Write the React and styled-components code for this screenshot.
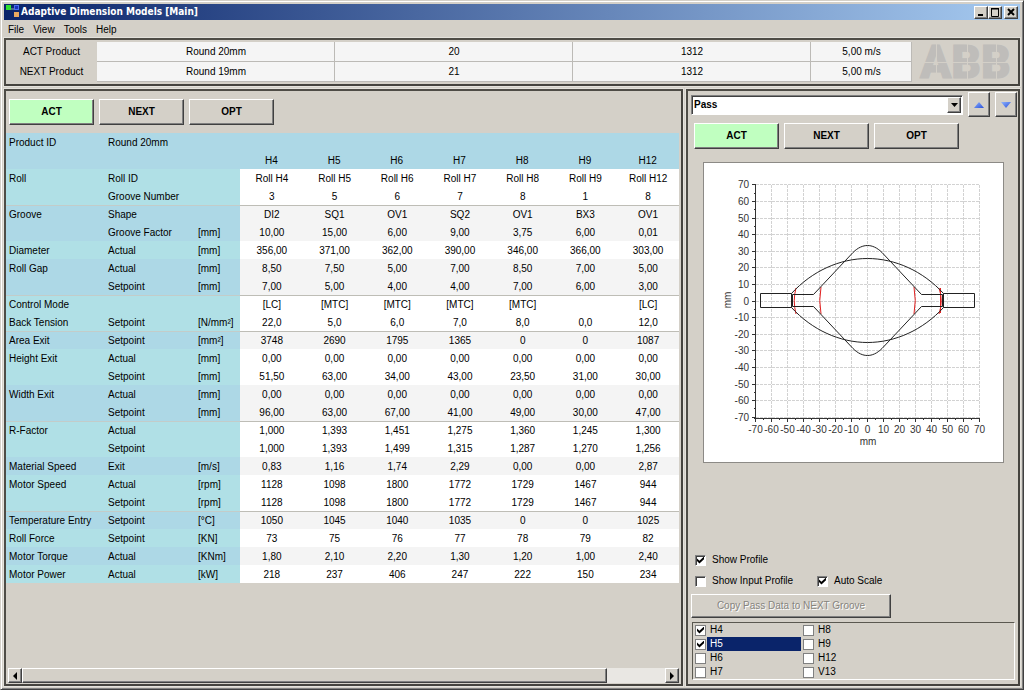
import React, { useState } from "react";
import styled, { createGlobalStyle, css } from "styled-components";

const GlobalStyle = createGlobalStyle`
  *, *::before, *::after { box-sizing: border-box; }
  body { margin: 0; background: #d4d0c8; }
  body, button, input, select, table {
    font-family: "Liberation Sans", Arial, sans-serif;
    font-size: 10px;
    line-height: 12px;
    color: #000;
  }
`;

const raised = css`
  border: 1px solid;
  border-color: #fff #404040 #404040 #fff;
  box-shadow: inset -1px -1px 0 #808080;
`;

const sunken = css`
  border: 1px solid;
  border-color: #808080 #fff #fff #808080;
  box-shadow: inset 1px 1px 0 #404040;
`;

const Window = styled.div`
  display: flex;
  flex-direction: column;
  min-height: 100vh;
  padding: 3px 3px 3px 3px;
  border: 1px solid;
  border-color: #d4d0c8 #404040 #404040 #d4d0c8;
  box-shadow: inset 1px 1px 0 #fff, inset -1px -1px 0 #808080;
  background: #d4d0c8;
`;

const TitleBar = styled.header`
  display: flex;
  align-items: center;
  height: 16px;
  padding: 0 2px 0 1px;
  background: linear-gradient(to right, #0a246a, #a6caf0);
`;

const Title = styled.h1`
  flex: 1;
  margin: 0;
  font-family: "DejaVu Sans Condensed", "DejaVu Sans", sans-serif;
  font-size: 10px;
  font-weight: bold;
  color: #fff;
`;

const CaptionButton = styled.button`
  ${raised}
  display: flex;
  width: 14px;
  height: 13px;
  padding: 0;
  margin-left: ${(p) => (p.$apart ? "2px" : "0")};
  background: #d4d0c8;
`;

const MenuBar = styled.nav`
  display: flex;
  align-items: center;
  gap: 9px;
  height: 18px;
  padding: 1px 0 0 4px;
`;

const MenuItem = styled.button`
  padding: 0;
  border: 0;
  background: none;
`;

const Panel = styled.section`
  border: 2px solid;
  border-color: #4e4c46 #45433e #45433e #4e4c46;
  outline: 1px solid #e4e2dc;
  background: #d4d0c8;
`;

const ProductPanel = styled(Panel)`
  display: grid;
  grid-template-columns: minmax(0, 1fr) 106px;
  padding: 2px 0;
`;

const ProductTable = styled.table`
  width: 100%;
  table-layout: fixed;
  border-collapse: separate;
  border-spacing: 0;
  text-align: center;
`;

const ProductName = styled.th`
  width: 91px;
  height: 20px;
  padding: 0;
  font-weight: normal;
`;

const ProductCell = styled.td`
  width: ${(p) => (p.$narrow ? "101px" : "auto")};
  height: 20px;
  padding: 1px 0 0 1px;
  border-right: 1px solid #bcbab6;
  border-bottom: 1px solid #bcbab6;
  background: #f5f5f5;
`;

const Logo = styled.svg`
  display: block;
  width: 106px;
  height: 40px;
  overflow: visible;
`;

const Workspace = styled.main`
  display: grid;
  flex: 1;
  grid-template-columns: minmax(0, 1fr) 334px;
  gap: 3px;
  margin-top: 3px;
`;

const DataPanel = styled(Panel)`
  display: flex;
  flex-direction: column;
  min-width: 0;
  padding: 8px 2px 1px 0;
`;

const PassPanel = styled(Panel)`
  display: flex;
  flex-direction: column;
  padding: 1px 1px 4px 3px;
`;

const Toolbar = styled.div`
  display: flex;
  gap: 5px;
  padding-left: 3px;
`;

const ModeButton = styled.button`
  ${raised}
  width: 85px;
  height: 26px;
  padding: 0;
  font-weight: bold;
  background: ${(p) => (p.$on ? "#c0ffc0" : "#d4d0c8")};
`;

const DataTable = styled.table`
  width: 100%;
  margin-top: 8px;
  table-layout: fixed;
  border-collapse: separate;
  border-spacing: 0;
  text-align: center;
`;

const Col = styled.col`
  width: ${(p) => p.$width};
`;

const Row = styled.tr`
  --label: ${(p) => (p.$shade ? "#add8e6" : "#b0e0e6")};
  --value: ${(p) => (p.$shade ? "#f4f4f4" : "#ffffff")};
  --rule-label: ${(p) => (p.$rule ? "#c3ccc9" : "var(--label)")};
  --rule-value: ${(p) => (p.$rule ? "#bebdb6" : "var(--value)")};
`;

const HeadCell = styled.th`
  height: 18px;
  padding: 2px 3px 0;
  font-weight: normal;
  text-align: ${(p) => (p.$left ? "left" : "center")};
  background: #add8e6;
`;

const LabelCell = styled.th`
  height: 18px;
  padding: 1px 0 0 3px;
  font-weight: normal;
  text-align: left;
  white-space: nowrap;
  border-top: 1px solid var(--rule-label);
  background: var(--label);
`;

const ValueCell = styled.td`
  height: 18px;
  padding: 1px 0 0 1px;
  white-space: nowrap;
  border-top: 1px solid var(--rule-value);
  background: var(--value);
`;

const ScrollBar = styled.div`
  display: grid;
  grid-template-columns: 14px minmax(0, 1fr) 58px 14px;
  height: 15px;
  margin: auto 0 0 2px;
  background: #e9e7e3;
`;

const ScrollButton = styled.button`
  ${raised}
  display: flex;
  align-items: center;
  justify-content: center;
  padding: 0;
  background: #d4d0c8;
`;

const Thumb = styled.div`
  ${raised}
  background: #d4d0c8;
`;

const Track = styled.div``;

const PassRow = styled.div`
  display: grid;
  grid-template-columns: minmax(0, 1fr) 22px 22px;
  align-items: center;
  gap: 5px;
  margin-bottom: 6px;
`;

const Combo = styled.div`
  ${sunken}
  display: grid;
  grid-template-columns: minmax(0, 1fr);
  position: relative;
  height: 20px;
  padding: 1px;
  background: #fff;
`;

const Select = styled.select`
  appearance: none;
  padding: 0 16px 0 1px;
  border: 0;
  outline: 0;
  font-weight: bold;
  background: #fff;
`;

const DropMark = styled.span`
  ${raised}
  position: absolute;
  top: 1px;
  right: 1px;
  display: flex;
  align-items: center;
  justify-content: center;
  width: 14px;
  height: 16px;
  background: #d4d0c8;
  pointer-events: none;
`;

const StepButton = styled.button`
  ${raised}
  display: flex;
  align-items: center;
  justify-content: center;
  height: 25px;
  padding: 0;
  background: #d4d0c8;
`;

const ChartFrame = styled.figure`
  width: 301px;
  margin: 13px 0 12px 12px;
  border: 1px solid #8c8a86;
  background: #fff;
`;

const ChartSvg = styled.svg`
  display: block;
  width: 100%;
  height: auto;
`;

const Options = styled.div`
  display: grid;
  grid-template-columns: 122px auto;
  justify-content: start;
  row-gap: 9px;
  margin: auto 0 7px 4px;
`;

const CheckLabel = styled.label`
  display: flex;
  align-items: center;
  gap: 6px;
  grid-column: ${(p) => (p.$wide ? "1 / -1" : "auto")};
`;

const CheckBox = styled.input`
  ${sunken}
  appearance: none;
  display: grid;
  flex: none;
  width: 11px;
  height: 11px;
  margin: 0;
  background: #fff;
  &:checked::before {
    content: "";
    width: 7px;
    height: 7px;
    margin: 1px;
    background: #000;
    clip-path: polygon(0 28%, 35% 62%, 100% 0, 100% 38%, 35% 100%, 0 66%);
  }
`;

const ListCheckBox = styled(CheckBox)`
  border-color: #808080;
  box-shadow: none;
`;

const CopyButton = styled.button`
  ${raised}
  width: 200px;
  height: 24px;
  padding: 0;
  color: #86847e;
  text-shadow: 1px 1px 0 #fff;
  background: #d4d0c8;
`;

const PassList = styled.div`
  border: 1px solid;
  border-color: #5a5850 #fff #fff #5a5850;
  display: grid;
  grid-template-columns: 94px 94px;
  grid-template-rows: repeat(4, 14px);
  grid-auto-flow: column;
  column-gap: 14px;
  margin: 4px 2px 0 1px;
  padding-left: 2px;
`;

const ListLabel = styled.label`
  display: grid;
  grid-template-columns: 12px minmax(0, 1fr);
  align-items: center;
  width: 106px;
  color: ${(p) => (p.$selected ? "#fff" : "#000")};
`;

const ListText = styled.span`
  padding: 1px 3px;
  background: ${(p) => (p.$selected ? "#0a246a" : "transparent")};
`;

const PRODUCTS = [
  ["ACT Product", "Round 20mm", "20", "1312", "5,00 m/s"],
  ["NEXT Product", "Round 19mm", "21", "1312", "5,00 m/s"],
];

const STANDS = ["H4", "H5", "H6", "H7", "H8", "H9", "H12"];

/* name, detail, unit, values, shaded, rule above */
const ROWS = [
  ["Roll", "Roll ID", "", "Roll H4|Roll H5|Roll H6|Roll H7|Roll H8|Roll H9|Roll H12", 0, 0],
  ["", "Groove Number", "", "3|5|6|7|8|1|8", 0, 0],
  ["Groove", "Shape", "", "DI2|SQ1|OV1|SQ2|OV1|BX3|OV1", 1, 1],
  ["", "Groove Factor", "[mm]", "10,00|15,00|6,00|9,00|3,75|6,00|0,01", 1, 0],
  ["Diameter", "Actual", "[mm]", "356,00|371,00|362,00|390,00|346,00|366,00|303,00", 0, 0],
  ["Roll Gap", "Actual", "[mm]", "8,50|7,50|5,00|7,00|8,50|7,00|5,00", 1, 0],
  ["", "Setpoint", "[mm]", "7,00|5,00|4,00|4,00|7,00|6,00|3,00", 1, 0],
  ["Control Mode", "", "", "[LC]|[MTC]|[MTC]|[MTC]|[MTC]||[LC]", 0, 1],
  ["Back Tension", "Setpoint", "[N/mm²]", "22,0|5,0|6,0|7,0|8,0|0,0|12,0", 0, 0],
  ["Area Exit", "Setpoint", "[mm²]", "3748|2690|1795|1365|0|0|1087", 1, 1],
  ["Height Exit", "Actual", "[mm]", "0,00|0,00|0,00|0,00|0,00|0,00|0,00", 0, 0],
  ["", "Setpoint", "[mm]", "51,50|63,00|34,00|43,00|23,50|31,00|30,00", 0, 0],
  ["Width Exit", "Actual", "[mm]", "0,00|0,00|0,00|0,00|0,00|0,00|0,00", 1, 0],
  ["", "Setpoint", "[mm]", "96,00|63,00|67,00|41,00|49,00|30,00|47,00", 1, 0],
  ["R-Factor", "Actual", "", "1,000|1,393|1,451|1,275|1,360|1,245|1,300", 0, 1],
  ["", "Setpoint", "", "1,000|1,393|1,499|1,315|1,287|1,270|1,256", 0, 0],
  ["Material Speed", "Exit", "[m/s]", "0,83|1,16|1,74|2,29|0,00|0,00|2,87", 1, 0],
  ["Motor Speed", "Actual", "[rpm]", "1128|1098|1800|1772|1729|1467|944", 0, 0],
  ["", "Setpoint", "[rpm]", "1128|1098|1800|1772|1729|1467|944", 0, 0],
  ["Temperature Entry", "Setpoint", "[°C]", "1050|1045|1040|1035|0|0|1025", 1, 1],
  ["Roll Force", "Setpoint", "[KN]", "73|75|76|77|78|79|82", 0, 0],
  ["Motor Torque", "Actual", "[KNm]", "1,80|2,10|2,20|1,30|1,20|1,00|2,40", 1, 0],
  ["Motor Power", "Actual", "[kW]", "218|237|406|247|222|150|234", 0, 0],
];

const LIST = ["H4", "H5", "H6", "H7", "H8", "H9", "H12", "V13"];
const TICKS = Array.from({ length: 15 }, (_, i) => -70 + i * 10);
const MINOR = Array.from({ length: 14 }, (_, i) => -65 + i * 10);

const px = (v) => 163.5 + v * 1.6;
const py = (v) => 137.5 - v * 1.66;

function AppIcon() {
  return (
    <svg width="16" height="16" viewBox="0 0 16 16" aria-hidden="true">
      <path d="M6 5h3M11 8v3" stroke="#9aa" fill="none" />
      <rect x="1" y="1" width="5" height="5" fill="#2fe02f" />
      <rect x="9.500" y="1.500" width="4" height="4" fill="#1a32b8" stroke="#4a6cf0" />
      <rect x="9" y="8" width="5" height="5" fill="#e8a860" />
    </svg>
  );
}

function CaptionGlyph({ d, width = 1 }) {
  return (
    <svg width="12" height="11" viewBox="0 0 12 11" aria-hidden="true">
      <path d={d} stroke="#000" strokeWidth={width} fill="none" />
    </svg>
  );
}

function Triangle({ points, fill = "#000" }) {
  return (
    <svg width="12" height="8" viewBox="0 0 12 8" aria-hidden="true">
      <polygon points={points} fill={fill} />
    </svg>
  );
}

function StepGlyph({ up }) {
  const id = up ? "step-up" : "step-down";
  return (
    <svg width="12" height="8" viewBox="0 0 12 8" aria-hidden="true">
      <defs>
        <linearGradient id={id} x1="0" x2="1" y1="0" y2="1">
          <stop offset="0" stopColor="#8fb4ff" />
          <stop offset="1" stopColor="#2a50d8" />
        </linearGradient>
      </defs>
      <polygon points={up ? "6,1 11,7 1,7" : "1,1 11,1 6,7"} fill={`url(#${id})`} />
    </svg>
  );
}

function BrandLogo() {
  return (
    <Logo viewBox="0 0 106 40" role="img" aria-label="ABB">
      <text x="8" y="36" fontFamily="Roboto, sans-serif" fontWeight="900" fontSize="46" fill="#bfbdba" stroke="#bfbdba">
        ABB
      </text>
      <path d="M6 20.500H102M24.500 2V38M55.500 2V38M84.500 2V38" stroke="#d4d0c8" />
    </Logo>
  );
}

function ProfileChart() {
  return (
    <ChartFrame>
      <ChartSvg viewBox="0 0 299 299" role="img" aria-label="Pass profile">
        <g stroke="#d2d2d2" strokeDasharray="3 1">
          {TICKS.map((t) => (
            <path key={t} d={`M${Math.round(px(t)) - 0.5} 22V255M52 ${Math.round(py(t)) + 0.5}H276`} />
          ))}
        </g>
        <path d="M51.500 21V256.500M50 255.500H276" stroke="#333" fill="none" />
        <g stroke="#333">
          {TICKS.map((t) => (
            <path key={t} d={`M${Math.round(px(t)) - 0.5} 255V259M48 ${Math.round(py(t)) + 0.5}H52`} />
          ))}
          {MINOR.map((t) => (
            <path key={t} d={`M${Math.round(px(t)) - 0.5} 255V257M50 ${Math.round(py(t)) + 0.5}H52`} />
          ))}
        </g>
        <g fontFamily="Liberation Sans, Arial, sans-serif" fontSize="10" fill="#333">
          {TICKS.map((t) => (
            <text key={t} x="45" y={py(t) + 4} textAnchor="end">{t}</text>
          ))}
          {TICKS.map((t) => (
            <text key={t} x={px(t)} y="270" textAnchor="middle">{t}</text>
          ))}
          <text x="164" y="282" textAnchor="middle">mm</text>
          <text transform="translate(27 137) rotate(-90)" textAnchor="middle">mm</text>
        </g>
        <g stroke="#e02020" fill="none">
          <path d="M92 125Q88.500 137.500 92 151M117 124Q114.500 137.500 117 151" />
          <path d="M210 124Q212.500 137.500 210 151M235 125Q239.500 137.500 235 151M236.500 125V150" />
        </g>
        <g stroke="#222" fill="none">
          <path d="M87.500 130.500H56.500V144.500H87.500ZM239.500 130.500H270.500V144.500H239.500Z" />
          <path d="M87.500 130.500C108 108 136 95.500 163.500 95.500S219 108 239.500 130.500" />
          <path d="M87.500 144.500C108 167 136 179.500 163.500 179.500S219 167 239.500 144.500" />
          <path d="M88.500 131.500H109.500L149 89.500C154 84.500 159 82.500 163.500 82.500S173 84.500 178 89.500L217.500 131.500H238.500V143.500H217.500L178 185.500C173 190.500 168 192.500 163.500 192.500S154 190.500 149 185.500L109.500 143.500H88.500Z" />
        </g>
      </ChartSvg>
    </ChartFrame>
  );
}

function ModeButtons() {
  const [mode, setMode] = useState("ACT");
  return (
    <Toolbar>
      {["ACT", "NEXT", "OPT"].map((m) => (
        <ModeButton key={m} type="button" $on={m === mode} onClick={() => setMode(m)}>
          {m}
        </ModeButton>
      ))}
    </Toolbar>
  );
}

function PassTable() {
  return (
    <DataTable>
      <colgroup>
        <Col $width="99px" />
        <Col $width="90px" />
        <Col $width="45px" />
        {STANDS.map((s) => <Col key={s} $width="auto" />)}
      </colgroup>
      <thead>
        <tr>
          <HeadCell $left>Product ID</HeadCell>
          <HeadCell $left colSpan={9}>Round 20mm</HeadCell>
        </tr>
        <tr>
          <HeadCell colSpan={3} />
          {STANDS.map((s) => <HeadCell key={s}>{s}</HeadCell>)}
        </tr>
      </thead>
      <tbody>
        {ROWS.map(([name, detail, unit, values, shade, rule], i) => (
          <Row key={i} $shade={shade} $rule={rule}>
            <LabelCell>{name}</LabelCell>
            <LabelCell>{detail}</LabelCell>
            <LabelCell>{unit}</LabelCell>
            {values.split("|").map((v, c) => <ValueCell key={c}>{v}</ValueCell>)}
          </Row>
        ))}
      </tbody>
    </DataTable>
  );
}

export default function App() {
  return (
    <Window>
      <GlobalStyle />
      <TitleBar>
        <AppIcon />
        <Title>Adaptive Dimension Models [Main]</Title>
        <CaptionButton type="button" aria-label="Minimize">
          <CaptionGlyph d="M3 8H8" width={2} />
        </CaptionButton>
        <CaptionButton type="button" aria-label="Maximize">
          <CaptionGlyph d="M2 2H10M2.500 1V9.500H9.500V1M2 1.500H10" />
        </CaptionButton>
        <CaptionButton type="button" aria-label="Close" $apart>
          <CaptionGlyph d="M3 2L9 8M9 2L3 8" width={2} />
        </CaptionButton>
      </TitleBar>
      <MenuBar>
        {["File", "View", "Tools", "Help"].map((m) => (
          <MenuItem key={m} type="button">{m}</MenuItem>
        ))}
      </MenuBar>
      <ProductPanel>
        <ProductTable>
          <tbody>
            {PRODUCTS.map(([name, ...cells]) => (
              <tr key={name}>
                <ProductName>{name}</ProductName>
                {cells.map((c, i) => (
                  <ProductCell key={i} $narrow={i === 3}>{c}</ProductCell>
                ))}
              </tr>
            ))}
          </tbody>
        </ProductTable>
        <BrandLogo />
      </ProductPanel>
      <Workspace>
        <DataPanel>
          <ModeButtons />
          <PassTable />
          <ScrollBar>
            <ScrollButton type="button" aria-label="Scroll left">
              <Triangle points="8,0 8,8 4,4" />
            </ScrollButton>
            <Thumb />
            <Track />
            <ScrollButton type="button" aria-label="Scroll right">
              <Triangle points="4,0 4,8 8,4" />
            </ScrollButton>
          </ScrollBar>
        </DataPanel>
        <PassPanel>
          <PassRow>
            <Combo>
              <Select aria-label="View">
                <option>Pass</option>
              </Select>
              <DropMark>
                <Triangle points="3,2 10,2 6.500,6" />
              </DropMark>
            </Combo>
            <StepButton type="button" aria-label="Previous"><StepGlyph up /></StepButton>
            <StepButton type="button" aria-label="Next"><StepGlyph /></StepButton>
          </PassRow>
          <ModeButtons />
          <ProfileChart />
          <Options>
            <CheckLabel $wide>
              <CheckBox type="checkbox" defaultChecked />
              Show Profile
            </CheckLabel>
            <CheckLabel>
              <CheckBox type="checkbox" />
              Show Input Profile
            </CheckLabel>
            <CheckLabel>
              <CheckBox type="checkbox" defaultChecked />
              Auto Scale
            </CheckLabel>
          </Options>
          <CopyButton type="button" disabled>Copy Pass Data to NEXT Groove</CopyButton>
          <PassList>
            {LIST.map((s) => (
              <ListLabel key={s} $selected={s === "H5"}>
                <ListCheckBox type="checkbox" defaultChecked={s === "H4" || s === "H5"} />
                <ListText $selected={s === "H5"}>{s}</ListText>
              </ListLabel>
            ))}
          </PassList>
        </PassPanel>
      </Workspace>
    </Window>
  );
}
